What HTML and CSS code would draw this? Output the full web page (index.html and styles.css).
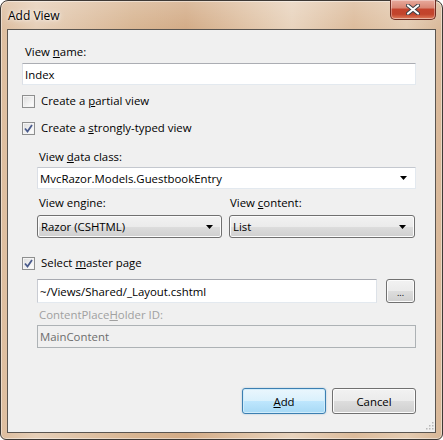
FILE: index.html
```html
<!DOCTYPE html>
<html>
<head>
<meta charset="utf-8">
<title>Add View</title>
<link rel="stylesheet" href="styles.css">
</head>
<body>
<div class="window">
  <div class="titlebar">
    <span class="title">Add View</span>
    <div class="close">
      <svg width="14" height="11" viewBox="0 0 14 11">
        <path d="M2 1.5 L12 9.5 M12 1.5 L2 9.5" stroke="#3b3f45" stroke-width="4" stroke-linecap="round"/>
        <path d="M2 1.5 L12 9.5 M12 1.5 L2 9.5" stroke="#ffffff" stroke-width="2.2" stroke-linecap="round"/>
      </svg>
    </div>
  </div>
  <div class="client">
    <div class="label first">View <u>n</u>ame:</div>
    <div class="textbox name">Index</div>

    <div class="check c1"><span class="box"></span><span>Create a <u>p</u>artial view</span></div>
    <div class="check c2"><span class="box"><svg width="9" height="9" viewBox="0 0 9 9"><path d="M1 4.5 L3.5 7.5 L8 1" fill="none" stroke="#4a5b8c" stroke-width="1.8"/></svg></span><span>Create a <u>s</u>trongly-typed view</span></div>

    <div class="indent">
      <div class="label lbl-data">View <u>d</u>ata class:</div>
      <div class="combo editable data">
        <span>MvcRazor.Models.GuestbookEntry</span>
        <svg class="arrow" width="7" height="4" viewBox="0 0 7 4"><path d="M0 0 H7 L3.5 4 Z" fill="#000"/></svg>
      </div>
      <div class="pair">
        <div class="col">
          <div class="label">View en<u>g</u>ine:</div>
          <div class="combo button-combo">
            <span>Razor (CSHTML)</span>
            <svg class="arrow" width="7" height="4" viewBox="0 0 7 4"><path d="M0 0 H7 L3.5 4 Z" fill="#000"/></svg>
          </div>
        </div>
        <div class="col right">
          <div class="label">View <u>c</u>ontent:</div>
          <div class="combo button-combo">
            <span>List</span>
            <svg class="arrow" width="7" height="4" viewBox="0 0 7 4"><path d="M0 0 H7 L3.5 4 Z" fill="#000"/></svg>
          </div>
        </div>
      </div>
    </div>

    <div class="check c3"><span class="box"><svg width="9" height="9" viewBox="0 0 9 9"><path d="M1 4.5 L3.5 7.5 L8 1" fill="none" stroke="#4a5b8c" stroke-width="1.8"/></svg></span><span>Select <u>m</u>aster page</span></div>

    <div class="indent">
      <div class="master-row">
        <div class="textbox master">~/Views/Shared/_Layout.cshtml</div>
        <div class="btn dots">...</div>
      </div>
      <div class="label disabled-label">ContentPlace<u>H</u>older ID:</div>
      <div class="textbox disabled">MainContent</div>
    </div>

    <div class="buttons">
      <div class="btn push default"><span><u>A</u>dd</span></div>
      <div class="btn push"><span>Cancel</span></div>
    </div>

    <svg class="grip" width="8" height="8" viewBox="0 0 8 8">
      <rect x="6" y="0" width="1.5" height="1.5" fill="#b8b8b8"/>
      <rect x="3" y="3" width="1.5" height="1.5" fill="#b8b8b8"/>
      <rect x="6" y="3" width="1.5" height="1.5" fill="#b8b8b8"/>
      <rect x="0" y="6" width="1.5" height="1.5" fill="#b8b8b8"/>
      <rect x="3" y="6" width="1.5" height="1.5" fill="#b8b8b8"/>
      <rect x="6" y="6" width="1.5" height="1.5" fill="#b8b8b8"/>
    </svg>
  </div>
</div>
</body>
</html>
```

FILE: styles.css
```css
* { box-sizing: border-box; }

body {
  margin: 0;
  font-family: "Open Sans", "Liberation Sans", sans-serif;
  font-size: 11.4px;
  color: #000;
  background: #ffffff;
}

u { text-decoration: underline; text-underline-offset: 1px; }

.window {
  width: 443px;
  height: 440px;
  border: 1px solid #3e3935;
  border-radius: 8px 8px 6px 6px;
  padding: 0 6px 6px 6px;
  display: flex;
  flex-direction: column;
  background:
    linear-gradient(to bottom, rgba(255,255,255,0.2), rgba(255,255,255,0) 30px),
    linear-gradient(to right, #ddbd9e 0%, #e6cfb8 8%, #d8b592 30%, #d3ab86 42%, #e0c3a6 56%, #e8d3bd 66%, #dcbb9b 80%, #e4cbb1 92%, #d8b797 100%);
  box-shadow: inset 0 0 0 1px rgba(255,255,255,0.45);
}

.titlebar {
  height: 28px;
  flex: none;
  position: relative;
  display: flex;
  align-items: flex-start;
}

.title {
  padding: 6px 0 0 1px;
  font-size: 12px;
  line-height: 17px;
  color: #000;
  text-shadow: 0 0 6px rgba(255,255,255,0.9), 0 0 3px rgba(255,255,255,0.9);
}

.close {
  position: absolute;
  top: -1px;
  right: 0;
  width: 46px;
  height: 20px;
  border: 1px solid #6f2c22;
  border-top: none;
  border-radius: 0 0 5px 5px;
  background: linear-gradient(to bottom, #e8aa9d 0%, #d98775 40%, #c4432d 50%, #c2442c 75%, #d66a4c 92%, #e4967a 100%);
  box-shadow: inset 0 0 0 1px rgba(255,255,255,0.35);
  display: flex;
  align-items: center;
  justify-content: center;
}

.client {
  flex: 1;
  position: relative;
  border: 1px solid #5a5550;
  background: #f0f0f0;
  padding: 0 19px 0 14px;
  display: flex;
  flex-direction: column;
}

.label {
  line-height: 16px;
  height: 16px;
  padding-left: 3px;
  white-space: nowrap;
}

.label.first { margin-top: 14px; }

.textbox {
  background: #fff;
  border: 1px solid #e3e9ef;
  border-top-color: #abadb3;
  border-left-color: #dbdfe6;
  padding: 0 2px;
  display: flex;
  align-items: center;
  white-space: nowrap;
}

.textbox.name { margin-top: 3px; height: 22px; }

.check {
  display: flex;
  align-items: center;
  height: 16px;
  line-height: 16px;
  gap: 6px;
}

.check.c1 { margin-top: 8px; }
.check.c2 { margin-top: 11px; }
.check.c3 { margin-top: 17px; }

.box {
  width: 13px;
  height: 13px;
  border: 1px solid #8e8f8f;
  background: linear-gradient(135deg, #dcdcdc, #f6f6f6 70%, #ffffff);
  box-shadow: inset 0 0 0 1px #f4f4f4;
  display: flex;
  align-items: center;
  justify-content: center;
  flex: none;
}

.indent {
  padding-left: 15px;
  display: flex;
  flex-direction: column;
}

.indent .label { padding-left: 2px; }

.lbl-data { margin-top: 13px; }

.combo {
  display: flex;
  align-items: center;
  justify-content: space-between;
  padding: 0 8px 0 3px;
  white-space: nowrap;
}

.combo.editable {
  margin-top: 2px;
  height: 22px;
  background: #fff;
  border: 1px solid #e3e9ef;
  border-top-color: #c4c8cf;
  border-left-color: #dbdfe6;
  padding-left: 2px;
}

.pair {
  margin-top: 6px;
  display: flex;
  gap: 7px;
}

.col { display: flex; flex-direction: column; width: 185px; }
.col.right { width: 186px; }
.col.right .label { padding-left: 1px; }

.button-combo {
  margin-top: 4px;
  height: 23px;
  border: 1px solid #707070;
  border-radius: 3px;
  background: linear-gradient(to bottom, #f2f2f2 0%, #ebebeb 50%, #dddddd 51%, #cfcfcf 100%);
  box-shadow: inset 0 0 0 1px #fcfcfc;
}

.master-row {
  margin-top: 8px;
  display: flex;
  gap: 9px;
  height: 24px;
}

.textbox.master {
  width: 340px;
  height: 24px;
  border-top-color: #a7a9b0;
  border-left-color: #c9ccd3;
  border-right-color: #dde2e8;
  border-bottom-color: #e3e9ef;
}

.btn {
  border: 1px solid #707070;
  border-radius: 3px;
  background: linear-gradient(to bottom, #f2f2f2 0%, #ebebeb 50%, #dddddd 51%, #cfcfcf 100%);
  box-shadow: inset 0 0 0 1px #fcfcfc;
  display: flex;
  align-items: center;
  justify-content: center;
}

.btn.dots {
  width: 29px;
  height: 24px;
  font-size: 9px;
  line-height: 10px;
  padding-top: 3px;
}

.disabled-label { margin-top: 4px; color: #a0a0a0; }

.textbox.disabled {
  margin-top: 2px;
  height: 23px;
  background: #f0f0f0;
  border: 1px solid #adb2b5;
  color: #6d6d6d;
}

.buttons {
  margin-top: 40px;
  display: flex;
  justify-content: flex-end;
  gap: 6px;
}

.btn.push {
  width: 84px;
  height: 26px;
}

.btn.push.default {
  border-color: #3c7fb1;
  background: linear-gradient(to bottom, #eaf6fd 0%, #d9f0fc 50%, #bee6fd 51%, #a7d9f5 100%);
  box-shadow: inset 0 0 0 1px #d0ecfb, 0 0 2px rgba(60,127,177,0.4);
}

.grip {
  position: absolute;
  right: 1px;
  bottom: 2px;
}
```
